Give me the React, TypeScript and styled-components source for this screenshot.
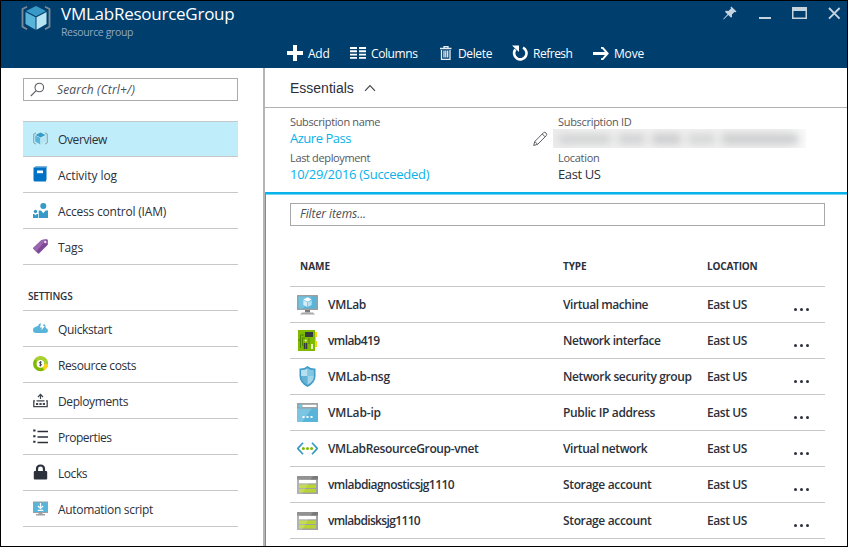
import React from 'react';
import styled, { createGlobalStyle } from 'styled-components';

const GlobalStyle = createGlobalStyle`
  * { box-sizing: border-box; }
  html, body { margin: 0; padding: 0; }
  body { font-family: "Open Sans", "Noto Sans", sans-serif; font-size: 12px; color: #2b303b; background: #fff; overflow: hidden; }
  svg { display: block; flex: none; }
`;

const Window = styled.div`
  display: flex;
  flex-direction: column;
  width: 848px;
  height: 547px;
  border: 1px solid #000;
  background: #fff;
`;

const Text = styled.span<{ $track?: number }>`
  letter-spacing: ${(p) => p.$track ?? 0}px;
  white-space: nowrap;
`;

/* Header */
const Header = styled.header`
  display: flex;
  flex-direction: column;
  flex: none;
  height: 67px;
  background: #003e6e;
  color: #fff;
`;

const TitleBar = styled.div`
  display: flex;
  height: 39px;
  padding: 0 6px 0 20px;
`;

const BrandMark = styled.div`
  width: 31px;
  padding-top: 4px;
`;

const Titles = styled.div`
  display: flex;
  flex-direction: column;
  flex: 1;
  padding: 2px 0 0 9px;
`;

const Title = styled(Text)`
  font-size: 17px;
  line-height: 22px;
`;

const Subtitle = styled(Text)`
  font-size: 10.5px;
  line-height: 14px;
  color: #90a9c0;
`;

const WindowControls = styled.div`
  display: flex;
  align-items: flex-start;
  gap: 21px;
  padding-top: 5px;
`;

const Toolbar = styled.nav`
  display: flex;
  align-items: center;
  height: 28px;
  padding-left: 286px;
`;

const Command = styled.button<{ $width: number; $gap: number }>`
  display: flex;
  align-items: center;
  gap: ${(p) => p.$gap}px;
  width: ${(p) => p.$width}px;
  height: 28px;
  padding: 0 0 2px;
  border: 0;
  background: none;
  color: #fff;
  font: inherit;
  line-height: 16px;

  span { padding-top: 2px; }
`;

/* Body */
const Body = styled.div`
  display: flex;
  flex: 1;
  min-height: 0;
`;

const Sidebar = styled.aside`
  width: 264px;
  flex: none;
  padding: 10px 25px 0 22px;
  border-right: 2px solid #b3b5b8;
`;

const SearchBox = styled.div`
  display: flex;
  align-items: center;
  gap: 12px;
  height: 23px;
  margin-bottom: 20px;
  padding: 0 6px 1px;
  border: 1px solid #aaabad;
  color: #4c4f55;
  font-style: italic;
`;

const Menu = styled.ul`
  list-style: none;
  margin: 0;
  padding: 0;
  border-top: 1px solid #c6c7c8;
`;

const MenuItem = styled.li<{ $active?: boolean }>`
  display: flex;
  align-items: center;
  gap: 10px;
  height: 36px;
  padding-left: 10px;
  border-bottom: 1px solid #c6c7c8;
  line-height: 16px;
  background: ${(p) => (p.$active ? '#bfeefa' : 'transparent')};

  &:first-child { height: ${(p) => (p.$active ? 35 : 36)}px; }
  svg { margin-bottom: 1px; }
  span { margin-top: 2px; }
`;

const SectionTitle = styled.h2`
  display: flex;
  align-items: center;
  height: 45px;
  margin: 0;
  padding: 16px 0 0 5px;
  font-size: 10px;
  font-weight: 600;
`;

const Main = styled.main`
  display: flex;
  flex-direction: column;
  flex: 1;
`;

const EssentialsHeader = styled.div`
  display: flex;
  align-items: center;
  gap: 10px;
  height: 40px;
  padding-left: 25px;
  border-bottom: 1px solid #b0b1b3;
  font: 14px/18px "Liberation Sans", Arial, sans-serif;
`;

const Essentials = styled.section`
  display: grid;
  grid-template-columns: 243px 25px 1fr;
  height: 84px;
  padding: 6px 0 0 25px;
`;

const Facts = styled.div`
  display: flex;
  flex-direction: column;
`;

const FactLabel = styled(Text)`
  font-size: 11px;
  line-height: 16px;
  color: #55585e;
`;

const FactValue = styled(Text)<{ $link?: boolean }>`
  height: 20px;
  font-size: 13px;
  line-height: 17px;
  color: ${(p) => (p.$link ? '#08b2e8' : '#2b303b')};
`;

const EditButton = styled.div`
  padding-top: 17px;
`;

const Redacted = styled.div`
  width: 253px;
  height: 19px;
  margin: -1px 0 2px -5px;
  overflow: hidden;
  background: linear-gradient(90deg, #ececec, #f1f1f1 8%, #f1f1f1 90%, #fafafa);
`;

const RedactedBlur = styled.div`
  display: flex;
  align-items: center;
  gap: 7px;
  height: 19px;
  padding-left: 6px;
  filter: blur(4px);
`;

const RedactedChunk = styled.i<{ $width: number; $tone: string }>`
  width: ${(p) => p.$width}px;
  height: 10px;
  background: ${(p) => p.$tone};
`;

const Resources = styled.section`
  flex: 1;
  padding: 9px 22px 0 24px;
  border-top: 2px solid #08b2ea;
  border-left: 1px solid #1ab0dd;
  box-shadow: inset 0 1px #74d6f4;
`;

const FilterBox = styled.div`
  display: flex;
  align-items: center;
  height: 23px;
  padding: 0 9px 2px;
  border: 1px solid #a6a8aa;
  color: #4c4f55;
  font-style: italic;
`;

const Row = styled.div`
  display: grid;
  grid-template-columns: 7px 31px 235px 144px 87px 1fr;
  align-items: center;
  height: 36px;
  border-bottom: 1px solid #c6c7c8;
  font-weight: 600;
  line-height: 16px;
`;

const HeadRow = styled.div`
  display: grid;
  grid-template-columns: 263px 144px 1fr;
  align-items: center;
  height: 61px;
  padding: 19px 0 0 10px;
  border-bottom: 1px solid #c6c7c8;
  font-size: 10px;
  font-weight: 700;
`;

const More = styled.div`
  display: flex;
  gap: 3px;
  padding-top: 10px;
  i { width: 3px; height: 3px; border-radius: 1.5px; background: #2b303b; }
`;

/* Icons */
const CubeIcon = ({ w, h, bracket }: { w: number; h: number; bracket: string }) => (
  <svg width={w} height={h} viewBox="0 0 30 25">
    <path d="M6 1.2 1.500 3.500v17.700L6 23.800M24 1.2l4.500 2.300v17.700L24 23.800" fill="none" stroke={bracket} strokeWidth="1.800" />
    <path d="M15 .5 25 5.500 15 10.700 5 5.500Z" fill="#3999c6" />
    <path d="M4.500 6.500 14.500 11.700V24.300L4.500 18.500Z" fill="#59b4d9" />
    <path d="M25.500 6.500 15.500 11.700V24.300L25.500 18.500Z" fill="#b8e3f2" />
  </svg>
);

const PinIcon = () => (
  <svg width="14" height="14" viewBox="0 0 14 14" fill="#c5d3df">
    <path d="M8.300.5 13.500 5.600 12.400 6.300 11.500 6 8.900 8.600 9 11 7.900 11.600 5.300 9 .7 13.500.2 13.100 4.500 8.200 2 5.700 2.700 4.800 5.400 5 8 2.600 7.500 1.400Z" />
  </svg>
);
const MinimizeIcon = () => (
  <svg width="13" height="14"><rect x="1" y="11" width="12" height="2" fill="#c5d3df" /></svg>
);
const MaximizeIcon = () => (
  <svg width="15" height="14"><path d="M0 1H15V13H0ZM1.500 5V11.500H13.500V5Z" fill="#c5d3df" fillRule="evenodd" /></svg>
);
const CloseIcon = () => (
  <svg width="13" height="14"><path d="m1 2 10.600 10.600M11.600 2 1 12.600" stroke="#c5d3df" strokeWidth="1.900" /></svg>
);

const AddIcon = () => (
  <svg width="16" height="16"><path d="M8 0V16M0 8H16" stroke="#fff" strokeWidth="4" /></svg>
);
const ColumnsIcon = () => (
  <svg width="16" height="12">
    <path d="M0 1H7M9 1H16M0 4.300H7M9 4.300H16M0 7.600H7M9 7.600H16M0 10.900H7M9 10.900H16" stroke="#fff" strokeWidth="1.900" />
  </svg>
);
const DeleteIcon = () => (
  <svg width="12" height="14" fill="none" stroke="#e8edf2">
    <path d="M0 2.500H11.500M4 2V.6H8V2" strokeWidth="1.300" />
    <path d="M1.500 4V13.300H10V4M4 4.500V11.500M5.800 4.500V11.500M7.700 4.500V11.500" strokeWidth="1.300" />
  </svg>
);
const RefreshIcon = () => (
  <svg width="16" height="16">
    <path d="M11 2.600A6.200 6.200 0 1 1 3.400 4.400" fill="none" stroke="#fff" strokeWidth="2.600" />
    <path d="M0 .5H7V7Z" fill="#fff" />
  </svg>
);
const MoveIcon = () => (
  <svg width="16" height="13"><path d="M0 6.500H14" stroke="#fff" strokeWidth="3" /><path d="M8 .7H9.500L14.600 6.500 9.500 12.300H8" fill="none" stroke="#fff" strokeWidth="2" /></svg>
);
const SearchIcon = () => (
  <svg width="15" height="15" fill="none" stroke="#5b5e63" strokeWidth="1.100"><circle cx="9.300" cy="5.500" r="4.300" /><path d="M6.200 8.700.8 14" /></svg>
);
const ChevronIcon = () => (
  <svg width="12" height="8"><path d="M1 6.800 6 1.500 11 6.800" fill="none" stroke="#45484f" strokeWidth="1.200" /></svg>
);
const PencilIcon = () => (
  <svg width="15" height="16" fill="none" stroke="#5b5e63">
    <path d="M.7 14.500 1.800 10.500 10.500 1.700Q11.700.7 13 2 14.400 3.400 13.300 4.600L4.700 13.300ZM1.800 10.500 4.700 13.300M9.300 3 12.100 5.800" />
  </svg>
);

const LogIcon = () => (
  <svg width="15" height="16">
    <path d="M2.500 0H14V13.500L12.500 15V2H1Z" fill="#7cb4dc" />
    <path d="M.5 1.500H13V15.500H2Q.5 15.500.5 14Z" fill="#0072c6" />
    <rect x="4" y="4.500" width="6" height="2.700" fill="#fff" />
  </svg>
);
const PeopleIcon = () => (
  <svg width="15" height="15" fill="#3999c6">
    <circle cx="10.300" cy="3" r="3" />
    <path d="M5.700 7.500H8L10.300 10.200 12.600 7.500H15V15H5.700Z" />
    <circle cx="2.500" cy="8.500" r="1.700" />
    <path d="M0 11H1.200L2.500 12.300 3.800 11H5V15H0Z" />
  </svg>
);
const TagIcon = () => (
  <svg width="15" height="15">
    <path d="M8.500 1 13.500.3Q14.800.3 14.800 1.600V5.700L6 14.600Q5.500 15 5 14.600L.3 9.700Q0 9.200.4 8.800Z" fill="#804998" />
    <path d="M8.500 1 13.500.3 3.200 12.700.3 9.700Q0 9.200.4 8.800Z" fill="#9966b0" />
    <circle cx="12.300" cy="3" r="1.200" fill="#eee0f3" />
  </svg>
);
const CloudIcon = () => (
  <svg width="15" height="15">
    <path d="M3 12Q0 12 0 9 0 6.500 2.700 6.100 3.500 5 5 5 5.400 2.500 8 2.300L7 6.500H9L8.300 9.500 11.800 5 10 4.900 11 2.800Q13 4 12.800 7 15 7.500 15 9.800 15 12 12.500 12Z" fill="#59b4d9" />
  </svg>
);
const CostIcon = () => (
  <svg width="15" height="16">
    <circle cx="7.500" cy="7.800" r="5.700" fill="none" stroke="#7fba00" strokeWidth="3.500" />
    <path d="M3 4.300A5.700 5.700 0 0 1 13.200 8" fill="none" stroke="#a8d031" strokeWidth="3.500" />
    <path d="M13.200 8A5.700 5.700 0 0 1 10.300 12.800" fill="none" stroke="#fcd116" strokeWidth="3.500" />
    <path d="M8.700 6.200Q6.200 5.300 6.400 6.900 6.600 7.600 7.800 7.800 9.200 8.400 8.400 9.200 7.500 9.900 6.200 9.200M7.500 5.200V10.400" fill="none" stroke="#3c4048" strokeWidth=".9" />
  </svg>
);
const DeployIcon = () => (
  <svg width="15" height="15" fill="none" stroke="#41454e">
    <path d="M7.500 6V1.500M5 4 7.500 1.300 10 4" strokeWidth="1.200" />
    <path d="M2 7.800H.8V13.700H14.200V7.800H13M3.500 7.800H11.500" strokeWidth="1.300" />
    <path d="M3 11H5.200M6.400 11H8.600M9.800 11H12" strokeWidth="2.200" />
  </svg>
);
const ListIcon = () => (
  <svg width="15" height="15" stroke="#2b303b" strokeWidth="2">
    <path d="M4.500 2.500H15M4.500 8H15M4.500 13.500H15" strokeWidth="1.600" />
    <path d="M.2 1.500H2.500M.2 7.200H2.500M.2 12.800H2.500" />
  </svg>
);
const LockIcon = () => (
  <svg width="15" height="16">
    <path d="M4 8V5Q4 1.500 7.500 1.500 11 1.500 11 5V8" fill="none" stroke="#2b303b" strokeWidth="2.200" />
    <rect x=".8" y="7" width="13.400" height="8.500" rx="1" fill="#2b303b" />
  </svg>
);
const ScriptIcon = () => (
  <svg width="15" height="15">
    <rect width="15" height="11.500" y=".5" fill="#9aa0a3" />
    <rect x="1" y="1.500" width="13" height="9.500" fill="#59b4d9" />
    <path d="M7.500 2V7.200M4.900 5 7.500 7.500 10.100 5M4.700 9.300H10.300" fill="none" stroke="#fff" strokeWidth="1.200" />
    <path d="M5.500 12H9.500V13H12V14.500H3V13H5.500Z" fill="#a0a1a2" />
  </svg>
);

const VmIcon = () => (
  <svg width="21" height="21">
    <rect y="1" width="21" height="15" rx=".5" fill="#9b9fa1" />
    <rect x="1.500" y="2.500" width="18" height="12" fill="#59b4d9" />
    <path d="M1.500 2.500H15L6 14.500H1.500Z" fill="#75c1e0" />
    <path d="M10.500 3.300 14.700 5.500 10.500 7.800 6.300 5.500Z" fill="#fff" />
    <path d="M6.300 6.200 10.200 8.300V13L6.300 10.900Z" fill="#d5edf6" />
    <path d="M14.700 6.200 10.800 8.300V13L14.700 10.900Z" fill="#b8e0f0" />
    <path d="M8 16H13V18.500H8Z" fill="#7a7a7a" />
    <path d="M5 18.500H16L18 20.500H3Z" fill="#a6a8a9" />
  </svg>
);
const NicIcon = () => (
  <svg width="21" height="21">
    <path d="M16 2H20V7H19V11H20V17H16Z" fill="#fcd116" />
    <rect x="1" width="17" height="21" fill="#7fba00" />
    <path d="M3.500 18V5H7M5.500 16V8H8M3.500 10H1M12 8V14" fill="none" stroke="#4f8500" />
    <rect x="8" y="2" width="8" height="5" fill="#353a40" />
    <path d="M7.500 13V19M9.500 13V19" stroke="#353a40" strokeWidth="1.500" />
    <circle cx="8.700" cy="10.500" r="1" fill="#e5f2c8" />
    <rect x="14" y="14" width="2" height="5" fill="#e5f2c8" />
  </svg>
);
const ShieldIcon = () => (
  <svg width="21" height="21">
    <path d="M10.500 0Q14 3 18.500 2.500V10Q18.500 17 10.500 21 2.500 17 2.500 10V2.500Q7 3 10.500 0Z" fill="#3f9cc8" />
    <path d="M10.500 2.200Q13.500 4.300 16.900 4V10H10.500Z" fill="#82c6e2" />
    <path d="M10.500 2.200Q7.500 4.300 4.100 4V10H10.500Z" fill="#b8dff0" />
    <path d="M4.100 10H10.500V19Q4.100 15.500 4.100 10Z" fill="#64b3d7" />
    <path d="M16.900 10H10.500V19Q16.900 15.500 16.900 10Z" fill="#a2d5ea" />
  </svg>
);
const IpIcon = () => (
  <svg width="21" height="19">
    <rect width="21" height="19" rx=".5" fill="#59b4d9" />
    <path d="M0 5H15L5 19H0Z" fill="#7cc5e2" />
    <rect width="21" height="5.500" fill="#9da2a4" />
    <rect x="5.500" y="1.800" width="14" height="2.200" fill="#fff" />
    <path d="M4.500 1.500 1.500 3 4.500 4.500Z" fill="#5fd0ee" stroke="#5fd0ee" />
    <path d="M5.500 14H7.500M9.500 14H11.500M13.500 14H15.500" stroke="#fff" strokeWidth="2" />
  </svg>
);
const VnetIcon = () => (
  <svg width="21" height="13">
    <path d="M6 .8.800 6.500 6 12.200M15 .8 20.200 6.500 15 12.200" fill="none" stroke="#3999c6" strokeWidth="1.700" />
    <g fill="#7fba00"><circle cx="6.400" cy="6.500" r="1.500" /><circle cx="10.500" cy="6.500" r="1.500" /><circle cx="14.600" cy="6.500" r="1.500" /></g>
  </svg>
);
const StorageIcon = () => (
  <svg width="21" height="18">
    <rect width="21" height="18" rx=".5" fill="#a0a1a2" />
    <rect width="21" height="3.500" fill="#7a7a7a" />
    <rect x="2" y="4" width="17" height="3.300" fill="#fff" />
    <rect x="2" y="8.500" width="17" height="3.500" fill="#b8d432" />
    <rect x="2" y="13" width="17" height="3.500" fill="#b8d432" />
    <path d="M0 0H16L5 18H0Z" fill="#fff" opacity=".18" />
  </svg>
);

type Item = { label: string; track: number; icon: React.ReactNode; active?: boolean };

const general: Item[] = [
  { label: 'Overview', track: -0.38, icon: <CubeIcon w={15} h={13} bracket="#7d939c" />, active: true },
  { label: 'Activity log', track: -0.07, icon: <LogIcon /> },
  { label: 'Access control (IAM)', track: -0.2, icon: <PeopleIcon /> },
  { label: 'Tags', track: -0.13, icon: <TagIcon /> },
];

const settings: Item[] = [
  { label: 'Quickstart', track: -0.36, icon: <CloudIcon /> },
  { label: 'Resource costs', track: -0.4, icon: <CostIcon /> },
  { label: 'Deployments', track: -0.39, icon: <DeployIcon /> },
  { label: 'Properties', track: -0.46, icon: <ListIcon /> },
  { label: 'Locks', track: -0.45, icon: <LockIcon /> },
  { label: 'Automation script', track: -0.31, icon: <ScriptIcon /> },
];

const commands = [
  { label: 'Add', track: -0.26, icon: <AddIcon />, width: 63, gap: 5 },
  { label: 'Columns', track: -0.41, icon: <ColumnsIcon />, width: 90, gap: 5 },
  { label: 'Delete', track: -0.37, icon: <DeleteIcon />, width: 72, gap: 6 },
  { label: 'Refresh', track: -0.49, icon: <RefreshIcon />, width: 81, gap: 5 },
  { label: 'Move', track: -0.19, icon: <MoveIcon />, width: 60, gap: 5 },
];

const resources = [
  { name: 'VMLab', nt: -0.3, type: 'Virtual machine', tt: -0.44, icon: <VmIcon /> },
  { name: 'vmlab419', nt: -0.59, type: 'Network interface', tt: -0.46, icon: <NicIcon /> },
  { name: 'VMLab-nsg', nt: -0.16, type: 'Network security group', tt: -0.37, icon: <ShieldIcon /> },
  { name: 'VMLab-ip', nt: -0.16, type: 'Public IP address', tt: -0.36, icon: <IpIcon /> },
  { name: 'VMLabResourceGroup-vnet', nt: -0.36, type: 'Virtual network', tt: -0.4, icon: <VnetIcon /> },
  { name: 'vmlabdiagnosticsjg1110', nt: -0.55, type: 'Storage account', tt: -0.35, icon: <StorageIcon /> },
  { name: 'vmlabdisksjg1110', nt: -0.65, type: 'Storage account', tt: -0.35, icon: <StorageIcon /> },
];

const MenuList = ({ items }: { items: Item[] }) => (
  <Menu>
    {items.map((item) => (
      <MenuItem key={item.label} $active={item.active}>
        {item.icon}
        <Text $track={item.track}>{item.label}</Text>
      </MenuItem>
    ))}
  </Menu>
);

export default function App() {
  return (
    <Window>
      <GlobalStyle />
      <Header>
        <TitleBar>
          <BrandMark><CubeIcon w={30} h={26} bracket="#7d8a96" /></BrandMark>
          <Titles>
            <Title $track={-0.25}>VMLabResourceGroup</Title>
            <Subtitle $track={-0.37}>Resource group</Subtitle>
          </Titles>
          <WindowControls>
            <PinIcon /><MinimizeIcon /><MaximizeIcon /><CloseIcon />
          </WindowControls>
        </TitleBar>
        <Toolbar>
          {commands.map((c) => (
            <Command key={c.label} $width={c.width} $gap={c.gap}>
              {c.icon}
              <Text $track={c.track}>{c.label}</Text>
            </Command>
          ))}
        </Toolbar>
      </Header>
      <Body>
        <Sidebar>
          <SearchBox><SearchIcon /><Text $track={0.15}>Search (Ctrl+/)</Text></SearchBox>
          <MenuList items={general} />
          <SectionTitle><Text $track={-0.19}>SETTINGS</Text></SectionTitle>
          <MenuList items={settings} />
        </Sidebar>
        <Main>
          <EssentialsHeader>Essentials<ChevronIcon /></EssentialsHeader>
          <Essentials>
            <Facts>
              <FactLabel $track={-0.36}>Subscription name</FactLabel>
              <FactValue $link $track={-0.48}>Azure Pass</FactValue>
              <FactLabel $track={-0.36}>Last deployment</FactLabel>
              <FactValue $link $track={-0.28}>10/29/2016 (Succeeded)</FactValue>
            </Facts>
            <EditButton><PencilIcon /></EditButton>
            <Facts>
              <FactLabel $track={-0.3}>Subscription ID</FactLabel>
              <Redacted>
                <RedactedBlur>
                  <RedactedChunk $width={52} $tone="#d0d1d2" />
                  <RedactedChunk $width={27} $tone="#cfd0d1" />
                  <RedactedChunk $width={29} $tone="#c9cacb" />
                  <RedactedChunk $width={27} $tone="#d3d4d5" />
                  <RedactedChunk $width={76} $tone="#c9cacb" />
                </RedactedBlur>
              </Redacted>
              <FactLabel $track={-0.3}>Location</FactLabel>
              <FactValue $track={-0.4}>East US</FactValue>
            </Facts>
          </Essentials>
          <Resources>
            <FilterBox><Text $track={-0.08}>Filter items...</Text></FilterBox>
            <HeadRow>
              <Text>NAME</Text>
              <Text $track={-0.1}>TYPE</Text>
              <Text $track={-0.2}>LOCATION</Text>
            </HeadRow>
            {resources.map((r) => (
              <Row key={r.name}>
                <span />
                {r.icon}
                <Text $track={r.nt}>{r.name}</Text>
                <Text $track={r.tt}>{r.type}</Text>
                <Text $track={-0.41}>East US</Text>
                <More><i /><i /><i /></More>
              </Row>
            ))}
          </Resources>
        </Main>
      </Body>
    </Window>
  );
}
